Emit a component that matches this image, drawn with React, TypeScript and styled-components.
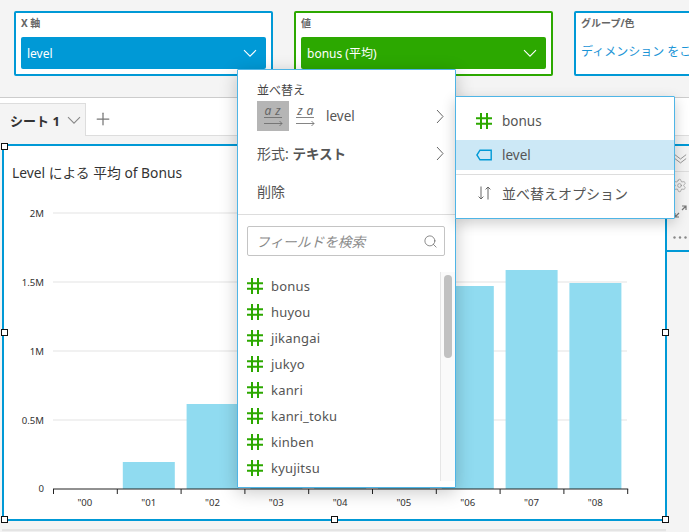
import React from "react";
import styled, { createGlobalStyle } from "styled-components";
import { Plus, Search, Settings } from "lucide-react";

const blue = "#0099d6";
const green = "#2ca800";
const menuBorder = "#4fb5e6";
const textGrey = "#555";

const GlobalStyle = createGlobalStyle`
  html, body {
    margin: 0;
    padding: 0;
    background: #f4f4f4;
  }
  * {
    box-sizing: border-box;
  }
`;

const Page = styled.div`
  position: relative;
  width: 689px;
  height: 532px;
  overflow: hidden;
  background: #f4f4f4;
  font-family: "Noto Sans", "Noto Sans CJK JP", sans-serif;
  color: ${textGrey};
`;

const Wells = styled.div`
  display: flex;
  gap: 21px;
  padding: 11px 0 0 14px;
`;

const Well = styled.div<{ $color: string; $wide?: boolean }>`
  flex: none;
  width: ${(p) => (p.$wide ? "200px" : "259px")};
  height: 65px;
  padding: 3px 5px 0;
  background: #fff;
  border: 2px solid ${(p) => p.$color};
  border-radius: 2px;
`;

const WellLabel = styled.div`
  height: 21px;
  font-size: 10px;
  line-height: 14px;
  font-weight: 700;
  color: #666;
`;

const Pill = styled.div<{ $color: string }>`
  display: flex;
  align-items: center;
  justify-content: space-between;
  height: 32px;
  padding: 0 9px 0 6px;
  background: ${(p) => p.$color};
  border-radius: 2px;
  color: #fff;
  font-size: 12px;
`;

const WellLink = styled.div`
  padding-top: 6px;
  font-size: 12px;
  line-height: 18px;
  white-space: nowrap;
  color: #1a94d6;
`;

const TabStrip = styled.div`
  display: flex;
  height: 39px;
  margin-top: 21px;
  background: #fff;
  border-top: 1px solid #ccc;
  border-bottom: 1px solid #ddd;
`;

const SheetTab = styled.div`
  display: flex;
  align-items: center;
  gap: 7px;
  width: 86px;
  height: 33px;
  margin: 5px 0 -1px;
  padding-left: 10px;
  background: #f4f4f4;
  border-top: 1px solid #ddd;
  border-right: 1px solid #ddd;
  font-size: 13px;
  font-weight: 700;
  color: #333;
`;

const AddTab = styled.div`
  display: flex;
  align-items: center;
  padding: 5px 0 0 7px;
  color: #777;
`;

const Canvas = styled.div`
  padding: 8px 0 0 2px;
`;

const CanvasRow = styled.div`
  display: flex;
  align-items: flex-start;
`;

const ChartFrame = styled.div`
  position: relative;
  flex: none;
  width: 665px;
  height: 377px;
  background: #fff;
  border: 2px solid ${blue};
  border-radius: 1px;
`;

const ChartTitle = styled.div`
  height: 44px;
  padding: 18px 0 0 8px;
  font-size: 13.8px;
  line-height: 18px;
  color: #333;
`;

const ChartSvg = styled.svg`
  display: block;
  font-family: "Noto Sans", sans-serif;
  font-size: 9.6px;
  fill: #333;
`;

const Handle = styled.span<{ $x: number; $y: number }>`
  position: absolute;
  left: ${(p) => p.$x}%;
  top: ${(p) => p.$y}%;
  width: 7px;
  height: 7px;
  margin: -3.5px 0 0 -3.5px;
  background: #fff;
  border: 1px solid #111;
`;

const SideTools = styled.div`
  flex: none;
  width: 24px;
  height: 108px;
  border-top: 2px solid ${blue};
  border-bottom: 2px solid ${blue};
  color: #888;
`;

const SideTool = styled.div<{ $divided?: boolean }>`
  display: flex;
  align-items: center;
  justify-content: flex-end;
  height: 26px;
  padding-right: 4px;
  border-bottom: ${(p) => (p.$divided ? "1px solid #ddd" : "none")};
`;

const NextPanel = styled.div`
  width: 664px;
  height: 12px;
  margin-top: 8px;
  background: #f0f0f0;
  border-top: 2px solid #e4e4e4;
`;

const FieldMenu = styled.div`
  position: absolute;
  left: 237px;
  top: 69px;
  width: 219px;
  height: 419px;
  background: #fff;
  border: 1px solid ${menuBorder};
  border-radius: 1px;
  box-shadow: 0 4px 18px rgba(0, 0, 0, 0.22);
`;

const SortLabel = styled.div`
  margin: 13px 0 0 19px;
  font-size: 12px;
  line-height: 16px;
  color: #444;
`;

const SortRow = styled.div`
  display: flex;
  align-items: center;
  height: 30px;
  margin: 2px 0 3px;
  padding: 0 11px 0 19px;
  font-size: 13.5px;
`;

const SortButton = styled.div<{ $active?: boolean }>`
  display: flex;
  align-items: center;
  justify-content: center;
  width: 32px;
  height: 30px;
  margin-right: ${(p) => (p.$active ? "0" : "5px")};
  background: ${(p) => (p.$active ? "#b5b5b5" : "transparent")};
`;

const SortField = styled.span`
  flex: 1;
`;

const MenuRow = styled.div`
  display: flex;
  align-items: center;
  justify-content: space-between;
  height: 38px;
  padding: 0 11px 0 19px;
  font-size: 14px;
`;

const StrongValue = styled.b`
  font-size: 13.5px;
  font-weight: 700;
`;

const MenuDivider = styled.div`
  margin-top: 4px;
  border-top: 1px solid #ddd;
`;

const SearchBox = styled.div`
  display: flex;
  align-items: center;
  justify-content: space-between;
  height: 30px;
  margin: 11px 10px 0 9px;
  padding: 0 6px 0 8px;
  border: 1px solid #c4c4c4;
  border-radius: 2px;
  font-size: 13.7px;
  font-style: italic;
  color: #8a8a8a;
`;

const FieldArea = styled.div`
  display: flex;
  height: 209px;
  margin-top: 16px;
`;

const FieldList = styled.div`
  flex: 1;
  padding: 1px 0 0 9px;
`;

const FieldRow = styled.div`
  display: flex;
  align-items: center;
  gap: 8px;
  height: 26px;
  font-size: 13px;
  letter-spacing: 0.2px;
`;

const ScrollTrack = styled.div`
  flex: none;
  width: 15px;
  padding: 3px 3px 0 3px;
  background: #fafafa;
  border-left: 1px solid #e6e6e6;
`;

const ScrollThumb = styled.div`
  width: 8px;
  height: 83px;
  background: #c1c1c1;
  border-radius: 4px;
`;

const SortMenu = styled.div`
  position: absolute;
  left: 455px;
  top: 96px;
  width: 220px;
  height: 123px;
  padding-top: 9px;
  background: #fff;
  border: 1px solid ${menuBorder};
  border-radius: 1px;
  box-shadow: 0 4px 14px rgba(0, 0, 0, 0.2);
`;

const SortMenuRow = styled.div<{ $selected?: boolean }>`
  display: flex;
  align-items: center;
  gap: 10px;
  height: 30px;
  margin-top: ${(p) => (p.$selected ? "4px" : "0")};
  padding-left: 20px;
  background: ${(p) => (p.$selected ? "#cce8f6" : "transparent")};
  font-size: 13.5px;
`;

const SortMenuDivider = styled.div`
  margin: 4px 0 3px;
  border-top: 1px solid #ddd;
`;

const OptionLabel = styled.span`
  font-size: 14px;
`;

const Chevron = ({ color = "#fff", size = 14 }: { color?: string; size?: number }) => (
  <svg width={size} height={size * 0.6} viewBox="0 0 14 8" fill="none" stroke={color} strokeWidth="1.1">
    <path d="M1 1l6 6 6-6" />
  </svg>
);

const ChevronRight = () => (
  <svg width="8" height="15" viewBox="0 0 8 15" fill="none" stroke="#666" strokeWidth="1">
    <path d="M1 1l6 6.5-6 6.5" />
  </svg>
);

const HashIcon = () => (
  <svg width="16" height="16" viewBox="0 0 16 16" fill="none" stroke={green} strokeWidth="2">
    <path d="M5 0v16M11 0v16M0 5.2h16M0 10.8h16" />
  </svg>
);

const TagIcon = () => (
  <svg width="16" height="12" viewBox="0 0 16 12" fill="none" stroke={blue} strokeWidth="1.4">
    <path d="M15.2 1.2H4L.9 6 4 10.8h11.2z" />
  </svg>
);

const SortArrowsIcon = () => (
  <svg width="16" height="14" viewBox="0 0 16 14" fill="none" stroke="#666" strokeWidth="1">
    <path d="M5 0.5v12.5M2.6 10.6L5 13l2.4-2.4M12 13.5V1M9.6 3.4L12 1l2.4 2.4" />
  </svg>
);

const SortGlyph = ({ first, second }: { first: string; second: string }) => (
  <svg width="22" height="30" viewBox="0 0 22 30" fill="none" stroke="#666" strokeWidth="0.8">
    <g fontSize="12" fontStyle="italic" fill="#666" stroke="none" textAnchor="middle">
      <text x="6" y="14">
        {first}
      </text>
      <text x="16" y="14">
        {second}
      </text>
    </g>
    <path d="M2 16.5h18M2 22.5h18M17.5 20L20 22.5 17.5 25" />
  </svg>
);

const DoubleChevron = () => (
  <svg width="13" height="12" viewBox="0 0 15 12" fill="none" stroke="#888" strokeWidth="1">
    <path d="M1 1l6.5 5L14 1M1 5.5l6.5 5 6.5-5" />
  </svg>
);

const ExpandIcon = () => (
  <svg width="13" height="13" viewBox="0 0 13 13" fill="none" stroke="#777" strokeWidth="1.2">
    <path d="M1 12l4-4M1 8v4h4M12 1L8 5M8 1h4v4" />
  </svg>
);

const DotsIcon = () => (
  <svg width="14" height="3" viewBox="0 0 14 3" fill="#888">
    <circle cx="1.5" cy="1.5" r="1.2" />
    <circle cx="7" cy="1.5" r="1.2" />
    <circle cx="12.5" cy="1.5" r="1.2" />
  </svg>
);

const gridLines = [
  { label: "2M", y: 213 },
  { label: "1.5M", y: 282 },
  { label: "1M", y: 351 },
  { label: "0.5M", y: 420 },
];

const bars = [
  { label: '"00', top: 489 },
  { label: '"01', top: 462 },
  { label: '"02', top: 404 },
  { label: '"03', top: 380 },
  { label: '"04', top: 420 },
  { label: '"05', top: 420 },
  { label: '"06', top: 286 },
  { label: '"07', top: 270 },
  { label: '"08', top: 283 },
];

const axisLeft = 53;
const axisStep = 63.8;
const baseline = 489;

const Chart = () => (
  <ChartSvg width="661" height="328" viewBox="4 190 661 328">
    {gridLines.map((g) => (
      <g key={g.label}>
        <line x1={axisLeft} x2="627" y1={g.y} y2={g.y} stroke="#e3e3e3" />
        <text x="44" y={g.y + 3.5} textAnchor="end">
          {g.label}
        </text>
      </g>
    ))}
    <text x="44" y={baseline + 3} textAnchor="end">
      0
    </text>
    {bars.map((b, i) => {
      const left = axisLeft + axisStep * i;
      return (
        <g key={b.label}>
          <rect x={left + 6} y={b.top} width="52" height={baseline - b.top} fill="#90dbf0" />
          <line x1={left + 0.5} x2={left + 0.5} y1={baseline} y2={baseline + 5} stroke="#222" />
          <text x={left + axisStep / 2} y={baseline + 17} textAnchor="middle">
            {b.label}
          </text>
        </g>
      );
    })}
    <line x1={axisLeft + axisStep * 9 + 0.5} x2={axisLeft + axisStep * 9 + 0.5} y1={baseline} y2={baseline + 5} stroke="#222" />
    <line x1={axisLeft} x2={axisLeft + axisStep * 9 + 1} y1={baseline} y2={baseline} stroke="#222" />
  </ChartSvg>
);

const fields = ["bonus", "huyou", "jikangai", "jukyo", "kanri", "kanri_toku", "kinben", "kyujitsu"];

const handles = [
  [0, 0],
  [50, 0],
  [100, 0],
  [0, 50],
  [100, 50],
  [0, 100],
  [50, 100],
  [100, 100],
];

export default function App() {
  return (
    <Page>
      <GlobalStyle />
      <Wells>
        <Well $color={blue}>
          <WellLabel>X 軸</WellLabel>
          <Pill $color={blue}>
            level
            <Chevron />
          </Pill>
        </Well>
        <Well $color={green}>
          <WellLabel>値</WellLabel>
          <Pill $color={green}>
            bonus (平均)
            <Chevron />
          </Pill>
        </Well>
        <Well $color={blue}>
          <WellLabel>グループ/色</WellLabel>
          <WellLink>ディメンション をここに追加</WellLink>
        </Well>
      </Wells>

      <TabStrip>
        <SheetTab>
          シート 1
          <Chevron color="#888" />
        </SheetTab>
        <AddTab>
          <Plus size={20} strokeWidth={1.5} />
        </AddTab>
      </TabStrip>

      <Canvas>
        <CanvasRow>
          <ChartFrame>
            <ChartTitle>Level による 平均 of Bonus</ChartTitle>
            <Chart />
            {handles.map(([x, y]) => (
              <Handle key={`${x}-${y}`} $x={x} $y={y} />
            ))}
          </ChartFrame>
          <SideTools>
            <SideTool $divided>
              <DoubleChevron />
            </SideTool>
            <SideTool>
              <Settings size={15} strokeWidth={1} />
            </SideTool>
            <SideTool>
              <ExpandIcon />
            </SideTool>
            <SideTool>
              <DotsIcon />
            </SideTool>
          </SideTools>
        </CanvasRow>
        <NextPanel />
      </Canvas>

      <FieldMenu>
        <SortLabel>並べ替え</SortLabel>
        <SortRow>
          <SortButton $active>
            <SortGlyph first="a" second="z" />
          </SortButton>
          <SortButton>
            <SortGlyph first="z" second="a" />
          </SortButton>
          <SortField>level</SortField>
          <ChevronRight />
        </SortRow>
        <MenuRow>
          <span>
            形式: <StrongValue>テキスト</StrongValue>
          </span>
          <ChevronRight />
        </MenuRow>
        <MenuRow>削除</MenuRow>
        <MenuDivider />
        <SearchBox>
          フィールドを検索
          <Search size={15} strokeWidth={1.2} color="#666" />
        </SearchBox>
        <FieldArea>
          <FieldList>
            {fields.map((f) => (
              <FieldRow key={f}>
                <HashIcon />
                {f}
              </FieldRow>
            ))}
          </FieldList>
          <ScrollTrack>
            <ScrollThumb />
          </ScrollTrack>
        </FieldArea>
      </FieldMenu>

      <SortMenu>
        <SortMenuRow>
          <HashIcon />
          bonus
        </SortMenuRow>
        <SortMenuRow $selected>
          <TagIcon />
          level
        </SortMenuRow>
        <SortMenuDivider />
        <SortMenuRow>
          <SortArrowsIcon />
          <OptionLabel>並べ替えオプション</OptionLabel>
        </SortMenuRow>
      </SortMenu>
    </Page>
  );
}
